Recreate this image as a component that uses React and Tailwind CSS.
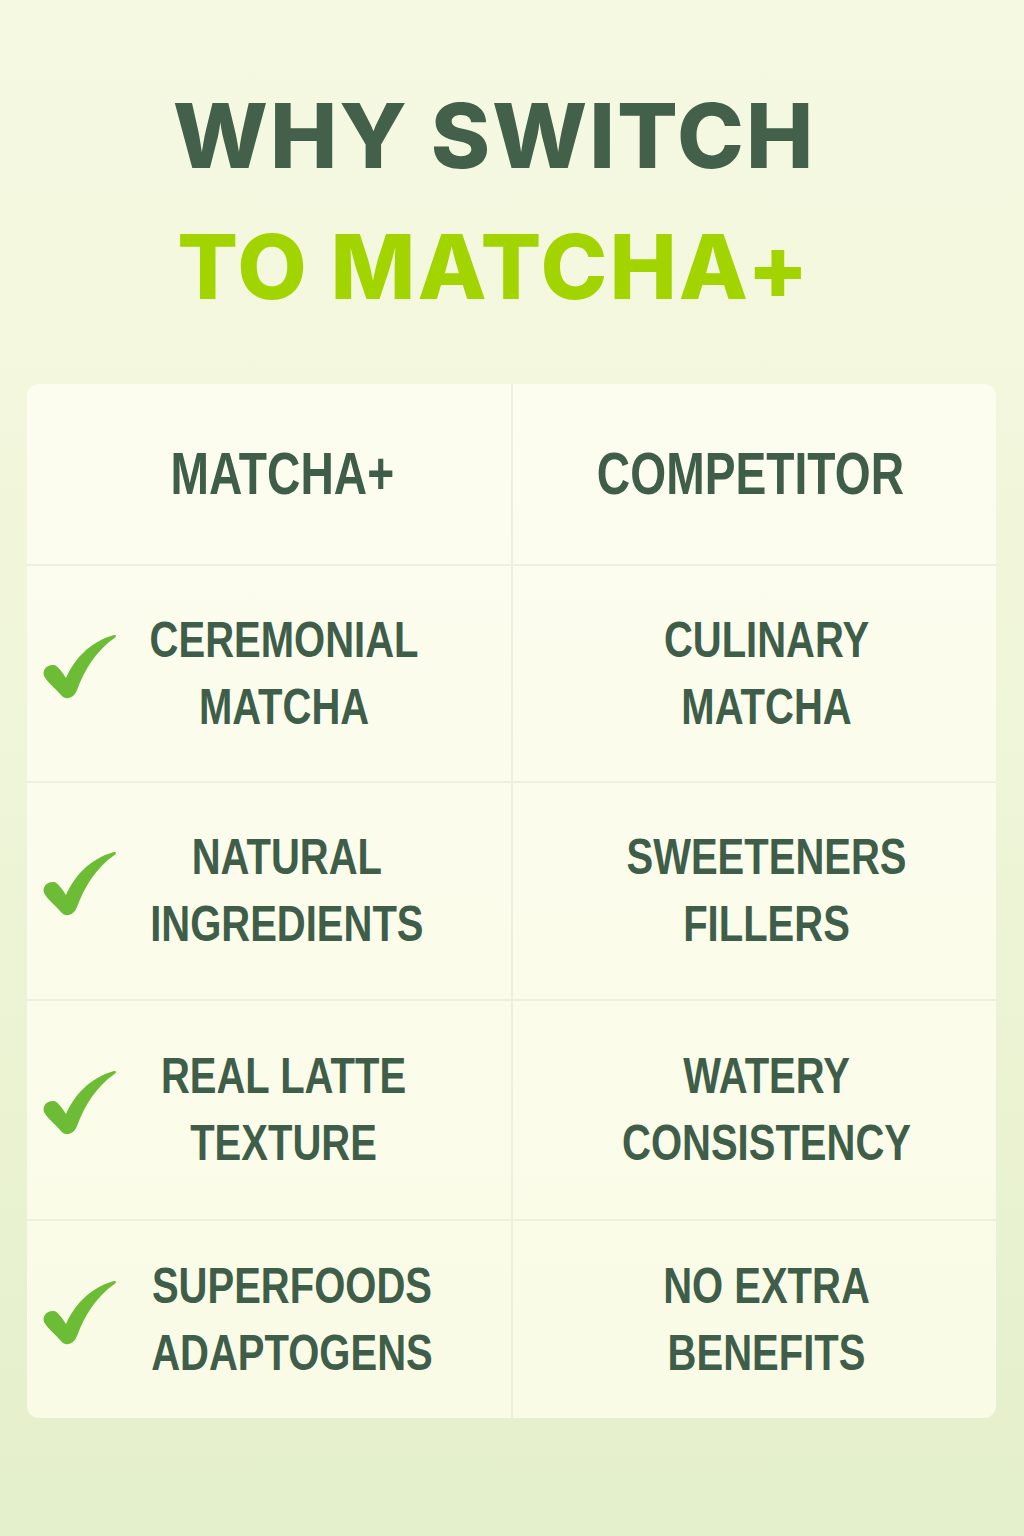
import React from "react";

const Check = () => (
  <svg width="74" height="66" viewBox="0 0 74 66" className="shrink-0">
    <path
      d="M2,42 C0,36 5,30 12,31 C16,32 20,38 24,44 C32,26 47,8 72,1 C74.5,0.5 74.5,3 72.5,4 C54,17 43,35 35,56 C32,64 24,67 19,61 C13,54 6,49 2,42 Z"
      fill="#6cbc36"
    />
  </svg>
);

const rows = [
  { h: "h-[217px]", l: ["CEREMONIAL", "MATCHA"], r: ["CULINARY", "MATCHA"] },
  { h: "h-[218px]", l: ["NATURAL", "INGREDIENTS"], r: ["SWEETENERS", "FILLERS"] },
  { h: "h-[220px]", l: ["REAL LATTE", "TEXTURE"], r: ["WATERY", "CONSISTENCY"] },
  { h: "h-[199px]", l: ["SUPERFOODS", "ADAPTOGENS"], r: ["NO EXTRA", "BENEFITS"] },
];

const cellFont =
  "font-['Liberation_Sans','Arial',sans-serif] font-bold text-[#3f5e49] text-center whitespace-nowrap";

export default function App() {
  return (
    <div className="w-[1024px] h-[1536px] bg-gradient-to-b from-[#f6f9e2] via-[#eff5d8] to-[#e4efcb] flex flex-col">
      <div className="pt-[70px] pr-[36px] flex flex-col items-center font-['Inter','Liberation_Sans',sans-serif] font-extrabold text-[90px] leading-[131px] tracking-[2px]">
        <div className="text-[#43604b]">WHY SWITCH</div>
        <div className="text-[#a2d400]">TO MATCHA+</div>
      </div>

      <div className="mt-[52px] ml-[27px] w-[969px] rounded-[12px] bg-gradient-to-b from-[#fcfdef] to-[#fafbe6] overflow-hidden">
        <div className="flex h-[180px]">
          <div className={`w-[484px] flex items-center justify-center pl-[26px] text-[60px] leading-[70px] ${cellFont}`}>
            <div className="scale-x-[0.77]">MATCHA+</div>
          </div>
          <div className="w-[2px] bg-[#ebf1de]" />
          <div className={`flex-1 flex items-center justify-center pr-[8px] text-[60px] leading-[70px] ${cellFont}`}>
            <div className="scale-x-[0.77]">COMPETITOR</div>
          </div>
        </div>
        {rows.map((row, i) => (
          <div key={i} className={`flex ${row.h} border-t-2 border-[#ebf1de]`}>
            <div className="w-[484px] flex items-center pl-[15px]">
              <div className="mb-[14px]">
                <Check />
              </div>
              <div className={`flex-1 pr-[60px] text-[50px] leading-[67px] ${cellFont}`}>
                {row.l.map((t) => (
                  <div key={t} className="scale-x-[0.8]">{t}</div>
                ))}
              </div>
            </div>
            <div className="w-[2px] bg-[#ebf1de]" />
            <div className={`flex-1 flex flex-col justify-center pl-[24px] text-[50px] leading-[67px] ${cellFont}`}>
              {row.r.map((t) => (
                <div key={t} className="scale-x-[0.8]">{t}</div>
              ))}
            </div>
          </div>
        ))}
      </div>
    </div>
  );
}
